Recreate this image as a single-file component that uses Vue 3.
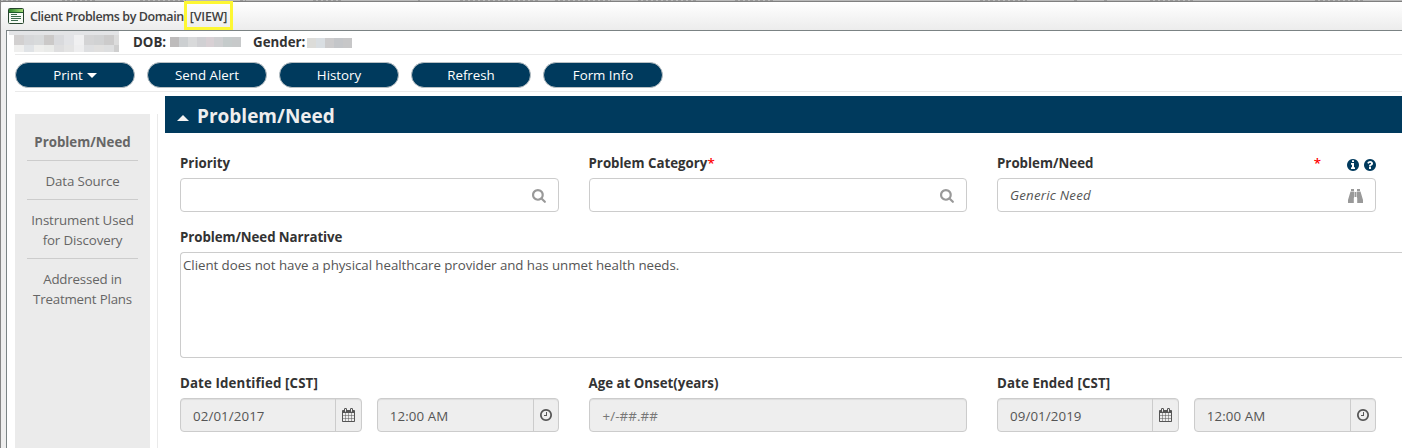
<script setup>
const actions = ['Print', 'Send Alert', 'History', 'Refresh', 'Form Info']

const sections = [
  { lines: ['Problem/Need'], active: true },
  { lines: ['Data Source'] },
  { lines: ['Instrument Used', 'for Discovery'] },
  { lines: ['Addressed in', 'Treatment Plans'] },
]

const disc =
  'M1664 896q0 209-103 385.5t-279.5 279.5-385.5 103-385.5-103-279.5-279.5-103-385.5 103-385.5 279.5-279.5 385.5-103 385.5 103 279.5 279.5 103 385.5z'

const icons = {
  search:
    'M1152 704q0-185-131.5-316.5t-316.5-131.5-316.5 131.5-131.5 316.5 131.5 316.5 316.5 131.5 316.5-131.5 131.5-316.5zm512 832q0 52-38 90t-90 38q-54 0-90-38l-343-342q-179 124-399 124-143 0-273.5-55.5t-225-150-150-225-55.5-273.5 55.5-273.5 150-225 225-150 273.5-55.5 273.5 55.5 225 150 150 225 55.5 273.5q0 220-124 399l343 343q37 37 37 90z',
  clock:
    'M1024 544v448q0 14-9 23t-23 9h-320q-14 0-23-9t-9-23v-64q0-14 9-23t23-9h224v-352q0-14 9-23t23-9h64q14 0 23 9t9 23zm416 352q0-148-73-273t-198-198-273-73-273 73-198 198-73 273 73 273 198 198 273 73 273-73 198-198 73-273z' + disc,
  calendar:
    'M192 1664h288v-288h-288v288zm352 0h320v-288h-320v288zm-352-352h288v-320h-288v320zm352 0h320v-320h-320v320zm-352-384h288v-288h-288v288zm736 736h320v-288h-320v288zm-384-736h320v-288h-320v288zm768 736h288v-288h-288v288zm-384-352h320v-320h-320v320zm-352-864v-288q0-13-9.5-22.5t-22.5-9.5h-64q-13 0-22.5 9.5t-9.5 22.5v288q0 13 9.5 22.5t22.5 9.5h64q13 0 22.5-9.5t9.5-22.5zm736 864h288v-320h-288v320zm-384-384h320v-288h-320v288zm384 0h288v-288h-288v288zm32-480v-288q0-13-9.5-22.5t-22.5-9.5h-64q-13 0-22.5 9.5t-9.5 22.5v288q0 13 9.5 22.5t22.5 9.5h64q13 0 22.5-9.5t9.5-22.5zm384-64v1280q0 52-38 90t-90 38h-1408q-52 0-90-38t-38-90v-1280q0-52 38-90t90-38h128v-96q0-66 47-113t113-47h64q66 0 113 47t47 113v96h384v-96q0-66 47-113t113-47h64q66 0 113 47t47 113v96h128q52 0 90 38t38 90z',
  info:
    'M1152 1376v-160q0-14-9-23t-23-9h-96v-512q0-14-9-23t-23-9h-320q-14 0-23 9t-9 23v160q0 14 9 23t23 9h96v320h-96q-14 0-23 9t-9 23v160q0 14 9 23t23 9h448q14 0 23-9t9-23zm-128-896v-160q0-14-9-23t-23-9h-192q-14 0-23 9t-9 23v160q0 14 9 23t23 9h192q14 0 23-9t9-23z' + disc,
  help:
    'M1024 1376v-192q0-14-9-23t-23-9h-192q-14 0-23 9t-9 23v192q0 14 9 23t23 9h192q14 0 23-9t9-23zm256-672q0-88-55.5-163t-138.5-116-170-41q-243 0-371 213-15 24 8 42l132 100q7 6 19 6 16 0 25-12 53-68 86-92 34-24 86-24 48 0 85.5 26t37.5 59q0 38-20 61t-68 45q-63 28-115.5 86.5t-52.5 125.5v36q0 14 9 23t23 9h192q14 0 23-9t9-23q0-19 21.5-49.5t54.5-49.5q32-18 49-28.5t46-35 44.5-48 28-60.5 12.5-81z' + disc,
}

const dates = [
  { label: 'Date Identified [CST]', date: '02/01/2017', cls: 'identified' },
  { label: 'Date Ended [CST]', date: '09/01/2019', cls: 'ended' },
]

// start and length of the marks along the strip behind the window
const marks = [
  [3, 18], [62, 34], [140, 46], [240, 6], [313, 28], [418, 2], [460, 80], [555, 56], [638, 58], [735, 38],
  [980, 47], [1074, 5], [1104, 4], [1150, 45], [1315, 48],
]

const masks = {
  name: [
    ['#d2d0d0', '#d6d7d9', '#d8dadb', '#cbc9c8', '#d9dadd', '#e2e3e6', '#f0f0f1', '#d4d4d5', '#d1d2d3', '#cccbcb', '#dcdcdc'],
    ['#efefee', '#e0e3e6', '#eeeeec', '#eaebe9', '#dededf', '#e4e4e4', '#eeeeef', '#dedfe1', '#e1e0df', '#dedfe0', '#cfcfcf'],
  ],
  dob: ['#bdbbbb', '#cccfd1', '#d8d9da', '#d0d0d3', '#d8d0d4', '#cfcfd1', '#c5cbcb', '#c7c9ca'],
  gender: ['#dcdcd9', '#d9dee2', '#cccbcc', '#c4c6c9', '#c7c7c8'],
}
</script>

<template>
  <div class="window">
    <svg class="backdrop" width="1402" height="2">
      <rect width="1402" height="1" fill="#b9b9b9" />
      <path v-for="m in marks" :key="m[0]" :d="`M${m[0]} .5h${m[1]}`" stroke="#999" stroke-dasharray="3 2" />
      <rect y="1" width="1402" height="1" fill="#808080" />
    </svg>
    <header class="titlebar">
      <svg class="app-icon" width="16" height="16" viewBox="0 0 16 16">
        <defs>
          <linearGradient id="cap" x1="0" x2="1"><stop offset="0" stop-color="#2b812b" /><stop offset="1" stop-color="#a4dc78" /></linearGradient>
        </defs>
        <rect x=".5" y=".5" width="15" height="15" rx="1" fill="#f6faf5" stroke="#26452d" />
        <rect x="1" y="1" width="14" height="3" fill="url(#cap)" />
        <path d="M1 4.5h14" stroke="#1e5a2b" />
        <path d="M3 6.5h6M3 8.5h10M3 10.5h10M3 12.5h7" stroke="#3c6b4d" />
      </svg>
      <span class="title">Client Problems by Domain</span>
      <span class="mode">[VIEW]</span>
    </header>

    <div class="body">
      <div class="client">
        <div class="mask-name">
          <div v-for="(row, r) in masks.name" :key="r" class="mask-row">
            <i v-for="(c, i) in row" :key="i" :style="{ background: c }"></i>
          </div>
        </div>
        <b class="dob">DOB:</b>
        <div class="mask-row mask-dob"><i v-for="(c, i) in masks.dob" :key="i" :style="{ background: c }"></i></div>
        <b class="gender">Gender:</b>
        <div class="mask-row mask-gender"><i v-for="(c, i) in masks.gender" :key="i" :style="{ background: c }"></i></div>
      </div>

      <div class="toolbar">
        <button v-for="a in actions" :key="a" class="pill">
          <span>{{ a }}</span><i v-if="a === 'Print'" class="caret"></i>
        </button>
      </div>

      <div class="content">
        <nav class="side">
          <div v-for="s in sections" :key="s.lines[0]" class="side-item" :class="{ active: s.active }">
            <div v-for="l in s.lines" :key="l">{{ l }}</div>
          </div>
        </nav>
        <div class="divider"></div>
        <main class="form">
          <h2><i class="collapse"></i><span>Problem/Need</span></h2>

          <div class="row first">
            <div class="field">
              <label class="l-priority"><span>Priority</span></label>
              <div class="input"><svg class="lens" viewBox="0 0 1792 1792"><path :d="icons.search" /></svg></div>
            </div>
            <div class="field">
              <label class="l-category"><span>Problem Category</span><em>*</em></label>
              <div class="input"><svg class="lens" viewBox="0 0 1792 1792"><path :d="icons.search" /></svg></div>
            </div>
            <div class="field">
              <label class="l-need"><span>Problem/Need</span><em>*</em>
                <svg class="hint" viewBox="128 128 1536 1536"><path :d="icons.info" fill-rule="evenodd" /></svg>
                <svg class="hint" viewBox="128 128 1536 1536"><path :d="icons.help" fill-rule="evenodd" /></svg>
              </label>
              <div class="input">
                <span class="generic">Generic Need</span>
                <svg class="binoculars" width="15" height="14" viewBox="0 0 15 14">
                  <path d="M3 0h3v2H3zM9 0h3v2H9zM2.5 2.5h3.7V8L5.8 9v5H0V11zM12.5 2.5H8.8V8l.4 1v5H15V11zM6.7 3h1.6v5H6.7z" />
                </svg>
              </div>
            </div>
          </div>

          <div class="narrative">
            <label class="l-narrative"><span>Problem/Need Narrative</span></label>
            <div class="textarea"><span>Client does not have a physical healthcare provider and has unmet health needs.</span></div>
          </div>

          <div class="row">
            <template v-for="(d, i) in dates" :key="d.label">
              <div class="field">
                <label :class="'l-' + d.cls"><span>{{ d.label }}</span></label>
                <div class="pair">
                  <div class="group">
                    <span class="val date">{{ d.date }}</span>
                    <span class="addon"><svg class="cal" viewBox="64 0 1664 1792"><path :d="icons.calendar" fill-rule="evenodd" /></svg></span>
                  </div>
                  <div class="group">
                    <span class="val time">12:00 AM</span>
                    <span class="addon narrow"><svg class="clk" viewBox="128 128 1536 1536"><path :d="icons.clock" fill-rule="evenodd" /></svg></span>
                  </div>
                </div>
              </div>
              <div v-if="i === 0" class="field">
                <label class="l-age"><span>Age at Onset(years)</span></label>
                <div class="group"><span class="val age">+/-##.##</span></div>
              </div>
            </template>
          </div>
        </main>
      </div>
    </div>
  </div>
</template>

<style>
html, body { margin: 0; overflow: hidden; background: #fff; }
</style>

<style scoped>
* { box-sizing: border-box; }
.window {
  width: 1402px; height: 448px; overflow: hidden; display: flex; flex-direction: column;
  font-family: "Open Sans", "Noto Sans", sans-serif; font-size: 13.3px; color: #333;
  background: #eee; border-left: 1px solid #858585;
}
.backdrop { display: block; height: 2px; flex: none; margin-left: -1px; }
.titlebar {
  height: 28px; flex: none; display: flex; align-items: flex-start; padding-left: 7px;
  background: linear-gradient(#fff, #ececec); border-top-left-radius: 4px;
}
.app-icon { margin-top: 6px; }
.title { margin: 5px 0 0 6px; width: 154px; font-size: 12.5px; line-height: 20px; font-weight: 600; white-space: nowrap; letter-spacing: -.4px; color: #404040; }
.mode { width: 49px; height: 29px; margin-top: -1px; border: 3px solid #fdf733; font-size: 12.5px; line-height: 26px; font-weight: 600; text-align: center; letter-spacing: -.2px; color: #404040; position: relative; z-index: 1; }
.body { flex: 1; margin-left: 5px; padding-left: 8px; border: solid #7b8384; border-width: 1px 0 0 1px; background: #fff; }

.client { height: 24px; display: flex; align-items: flex-start; border-bottom: 1px solid #eaeaea; font-size: 13.3px; line-height: 22px; }
.mask-name { width: 110px; height: 22px; margin: 0 0 0 -6px; padding: 0 0 0 5px; border-top: 4px solid #e3e4e6; }
.mask-row { display: flex; }
.mask-row i { width: 10px; height: 10px; flex: none; }
.mask-name .mask-row + .mask-row i { height: 7px; }
.mask-name i:last-child { width: 5px; }
.dob { margin-left: 14px; width: 37px; }
.mask-dob { margin-top: 6px; width: 71px; }
.mask-dob i { flex: 1; }
.gender { margin-left: 12px; width: 54px; }
.mask-gender { margin-top: 7px; }
.mask-gender i { width: 9px; }

.toolbar { height: 37px; padding-top: 7px; display: flex; gap: 12px; border-bottom: 1px solid #eaeaea; }
.pill {
  width: 120px; height: 26px; padding: 0; border: 1px solid #b9c0c4; border-radius: 13px; background: #003a5d; color: #fff;
  font: 13.3px/24px "Open Sans", "Noto Sans", sans-serif; display: flex; align-items: center; justify-content: center;
}
.caret { margin-left: 4px; border: 5px solid transparent; border-top: 5px solid #fff; border-bottom: 0; }

.content { display: flex; align-items: flex-start; padding-top: 4px; }
.side { width: 135px; height: 340px; flex: none; margin-top: 18px; padding: 8px 12px; background: #ebebeb; color: #666; text-align: center; line-height: 20px; }
.side-item { padding: 10px 0 8px; border-bottom: 1px solid #ccc; white-space: nowrap; letter-spacing: -.12px; }
.side-item:last-child { border: 0; letter-spacing: -.18px; }
.side-item.active { font-weight: 700; letter-spacing: 0; }
.divider { width: 1px; height: 340px; margin: 18px 7px 0; background: #eaeaea; }

.form { flex: 1; }
h2 { height: 37px; margin: 0; padding-left: 12px; display: flex; align-items: center; background: #003a5d; color: #eee; font-size: 19px; line-height: 37px; font-weight: 700; }
h2 span { margin-left: 8px; margin-top: 4px; }
.collapse { margin-top: 6px; border: 6px solid transparent; border-bottom: 6px solid #f3f3f3; border-top: 0; }
.row { display: flex; gap: 30px; padding: 15px 0 0 15px; }
.row.first { padding-top: 20px; }
.field { width: 378.5px; flex: none; }
label { display: flex; height: 25px; line-height: 20px; font-weight: 700; color: #333; white-space: nowrap; }
label em { color: #f00; font-style: normal; font-weight: 600; }
.l-identified { letter-spacing: .12px; }
.l-ended { letter-spacing: .1px; }
.l-narrative { letter-spacing: -.08px; }
.l-need { width: 379px; }
.l-need em { margin-left: auto; margin-right: 21px; }
.hint { width: 12px; height: 12px; margin: 6px 0 0 5px; fill: #003a5d; }
.input, .group { height: 34px; display: flex; align-items: center; border: 1px solid #ccc; border-radius: 4px; }
.input { justify-content: flex-end; padding: 0 12px; }
.lens { width: 15px; height: 15px; margin: 3px -1px 0 0; fill: #999; }
.generic { margin-right: auto; font-style: italic; color: #555; letter-spacing: .22px; }
.binoculars { fill: #999; margin-top: 2px; }
.narrative { padding: 15px 0 0 15px; }
.textarea { height: 106px; padding: 2px; border: 1px solid #ccc; border-right: 0; border-radius: 4px 0 0 4px; color: #555; line-height: 20px; white-space: nowrap; letter-spacing: -.045px; }
.pair { display: flex; gap: 15px; }
.pair .group { width: 182px; }
.group { background: #eee; color: #555; box-shadow: inset 0 1px 1px rgba(0, 0, 0, .075); }
.val { flex: 1; padding-left: 12px; padding-top: 1px; letter-spacing: .1px; }
.age { color: #777; padding-left: 13px; }
.addon { width: 26px; height: 32px; display: flex; align-items: center; justify-content: center; border-left: 1px solid #ccc; }
.addon.narrow { width: 25px; }
.cal { width: 13px; height: 14px; fill: #555; }
.clk { width: 12px; height: 12px; fill: #555; }
</style>
